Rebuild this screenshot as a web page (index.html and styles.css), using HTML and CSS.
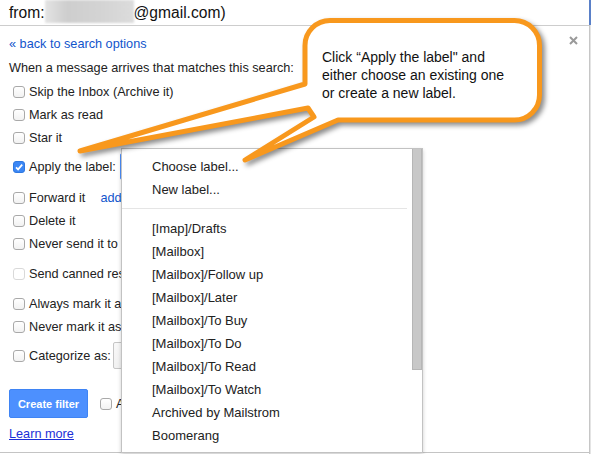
FILE: index.html
```html
<!DOCTYPE html>
<html>
<head>
<meta charset="utf-8">
<link rel="stylesheet" href="styles.css">
</head>
<body>
<div class="page">
  <div class="main">
    <div class="header">from:<span class="blur"></span>@gmail.com)</div>
    <div class="dialog">
      <div class="row toprow">
        <a class="link">« back to search options</a>
        <svg class="close" width="9" height="9" viewBox="0 0 9 9"><path d="M1 1L8 8M8 1L1 8" stroke="#9a9a9a" stroke-width="2"/></svg>
      </div>
      <div class="row m1">When a message arrives that matches this search:</div>
      <div class="row m1"><span class="cb"></span>Skip the Inbox (Archive it)</div>
      <div class="row"><span class="cb"></span>Mark as read</div>
      <div class="row"><span class="cb"></span>Star it</div>
      <div class="row m6"><span class="cb checked"><svg width="12" height="12" viewBox="0 0 12 12"><path d="M3 6.3L5.1 8.4L9.2 3.6" fill="none" stroke="#fff" stroke-width="1.7"/></svg></span>Apply the label:<span class="sel-focus"></span></div>
      <div class="row m8"><span class="cb"></span>Forward it<a class="link add">add forwarding address</a></div>
      <div class="row"><span class="cb"></span>Delete it</div>
      <div class="row"><span class="cb"></span>Never send it to Spam</div>
      <div class="row m7"><span class="cb disabled"></span>Send canned response:</div>
      <div class="row m7"><span class="cb"></span>Always mark it as important</div>
      <div class="row"><span class="cb"></span>Never mark it as important</div>
      <div class="row m6"><span class="cb"></span>Categorize as:<span class="sel"></span></div>
      <div class="row btn-row"><span class="btn">Create filter</span><span class="cb"></span>Also apply filter to matching conversations.</div>
      <div class="row m4"><a class="learn">Learn more</a></div>
    </div>
  </div>
  <div class="edge"></div>

  <div class="menu">
    <div class="menu-list">
      <div class="item">Choose label...</div>
      <div class="item">New label...</div>
      <div class="sep"></div>
      <div class="item">[Imap]/Drafts</div>
      <div class="item">[Mailbox]</div>
      <div class="item">[Mailbox]/Follow up</div>
      <div class="item">[Mailbox]/Later</div>
      <div class="item">[Mailbox]/To Buy</div>
      <div class="item">[Mailbox]/To Do</div>
      <div class="item">[Mailbox]/To Read</div>
      <div class="item">[Mailbox]/To Watch</div>
      <div class="item">Archived by Mailstrom</div>
      <div class="item">Boomerang</div>
      <div class="item">Boomerang-Outbox</div>
    </div>
    <div class="track"><div class="thumb"></div></div>
  </div>

  <svg class="callout" width="591" height="454" viewBox="0 0 591 454">
    <path d="M330 20.5 H514.5 A25 25 0 0 1 539.5 45.5 V95 A25 25 0 0 1 514.5 120 H338 L245 160 L314 117 L308 108 L80 151 L305 84 V45.5 A25 25 0 0 1 330 20.5 Z" fill="#fff" stroke="#f8981d" stroke-width="5" stroke-linejoin="round"/>
  </svg>
  <div class="callout-text">Click “Apply the label" and<br>either choose an existing one<br>or create a new label.</div>
</div>
</body>
</html>
```

FILE: styles.css
```css
* { box-sizing: border-box; }
body {
  margin: 0;
  font-family: "Liberation Sans", Arial, sans-serif;
  color: #222;
  background: #fff;
}
.page {
  position: relative;
  display: flex;
  width: 591px;
  height: 454px;
  overflow: hidden;
}
.main {
  width: 589px;
  display: flex;
  flex-direction: column;
}
.edge {
  width: 2px;
  background:
    linear-gradient(#5a80c8 0 25px, transparent 25px),
    linear-gradient(90deg, #c6c6c6 1px, #e4e4e4 1px);
}
.header {
  height: 26px;
  flex: none;
  border-bottom: 1px solid #cdcdcd;
  padding-left: 9px;
  font-size: 15.6px;
  line-height: 25px;
  color: #111;
  display: flex;
  align-items: flex-start;
  white-space: nowrap;
}
.blur {
  display: inline-block;
  width: 89px;
  height: 23px;
  background: linear-gradient(90deg, #e4e4e4, #cecece 25%, #d3d3d3 60%, #dcdcdc);
  filter: blur(1.2px);
}
.dialog {
  height: 427px;
  flex: none;
  border-bottom: 1px solid #c4c4c4;
  padding: 6px 11px 0 9px;
  font-size: 12.7px;
  display: flex;
  flex-direction: column;
}
.row {
  height: 23px;
  flex: none;
  display: flex;
  align-items: center;
  white-space: nowrap;
}
.m1 { margin-top: 1px; }
.m4 { margin-top: 4px; }
.m6 { margin-top: 6px; }
.m7 { margin-top: 7px; }
.m8 { margin-top: 8px; }
.toprow { justify-content: space-between; }
.close { align-self: flex-start; margin-top: 4px; }
.link { color: #15c; text-decoration: none; }
.add { margin-left: 15px; }
.learn { color: #1c2fd8; text-decoration: underline; }
.cb {
  width: 12px;
  height: 12px;
  flex: none;
  margin: 0 4px;
  border: 1px solid #a9a9a9;
  border-radius: 3px;
  background: linear-gradient(#fff, #f2f2f2);
  display: flex;
}
.cb.checked {
  background: #3b87f5;
  border-color: #2f78e0;
}
.cb.checked svg { margin: -1px; }
.cb.disabled { border-color: #d9d9d9; background: #fff; }
.sel-focus {
  width: 120px;
  height: 27px;
  flex: none;
  margin-left: 4px;
  border: 1px solid #4d90fe;
  border-radius: 2px;
}
.sel {
  width: 140px;
  height: 27px;
  flex: none;
  margin-left: 2px;
  border: 1px solid #c6c6c6;
  border-radius: 2px;
  background: linear-gradient(#f8f8f8, #f1f1f1);
}
.btn-row { height: 29px; margin-top: 22px; }
.btn {
  width: 79px;
  height: 29px;
  flex: none;
  background: #4d90fe;
  border: 1px solid #3f84f4;
  border-radius: 2px;
  color: #fff;
  font-weight: bold;
  font-size: 11px;
  display: flex;
  align-items: center;
  justify-content: center;
}
.btn-row .cb { margin-left: 12px; }

.menu {
  position: absolute;
  left: 121px;
  top: 148px;
  width: 302px;
  height: 305px;
  border: 1px solid #c2c2c2;
  background: #fff;
  box-shadow: 0 2px 4px rgba(0, 0, 0, 0.2);
  display: flex;
  font-size: 13px;
  color: #222;
  overflow: hidden;
}
.menu-list { flex: 1; padding-top: 6px; }
.item {
  height: 23px;
  line-height: 23px;
  padding-left: 30px;
  white-space: nowrap;
}
.sep {
  height: 1px;
  background: #e5e5e5;
  margin: 7px 5px 8px 0;
}
.track { width: 10px; flex: none; }
.thumb {
  height: 221px;
  background: #c8c8c8;
  border: 1px solid #b6b6b6;
  border-top: none;
}

.callout {
  position: absolute;
  left: 0;
  top: 0;
  pointer-events: none;
  filter: drop-shadow(3px 3px 2.5px rgba(0, 0, 0, 0.45));
}
.callout-text {
  position: absolute;
  left: 322px;
  top: 48px;
  font-size: 14px;
  line-height: 18px;
  color: #111;
  white-space: nowrap;
}
```
